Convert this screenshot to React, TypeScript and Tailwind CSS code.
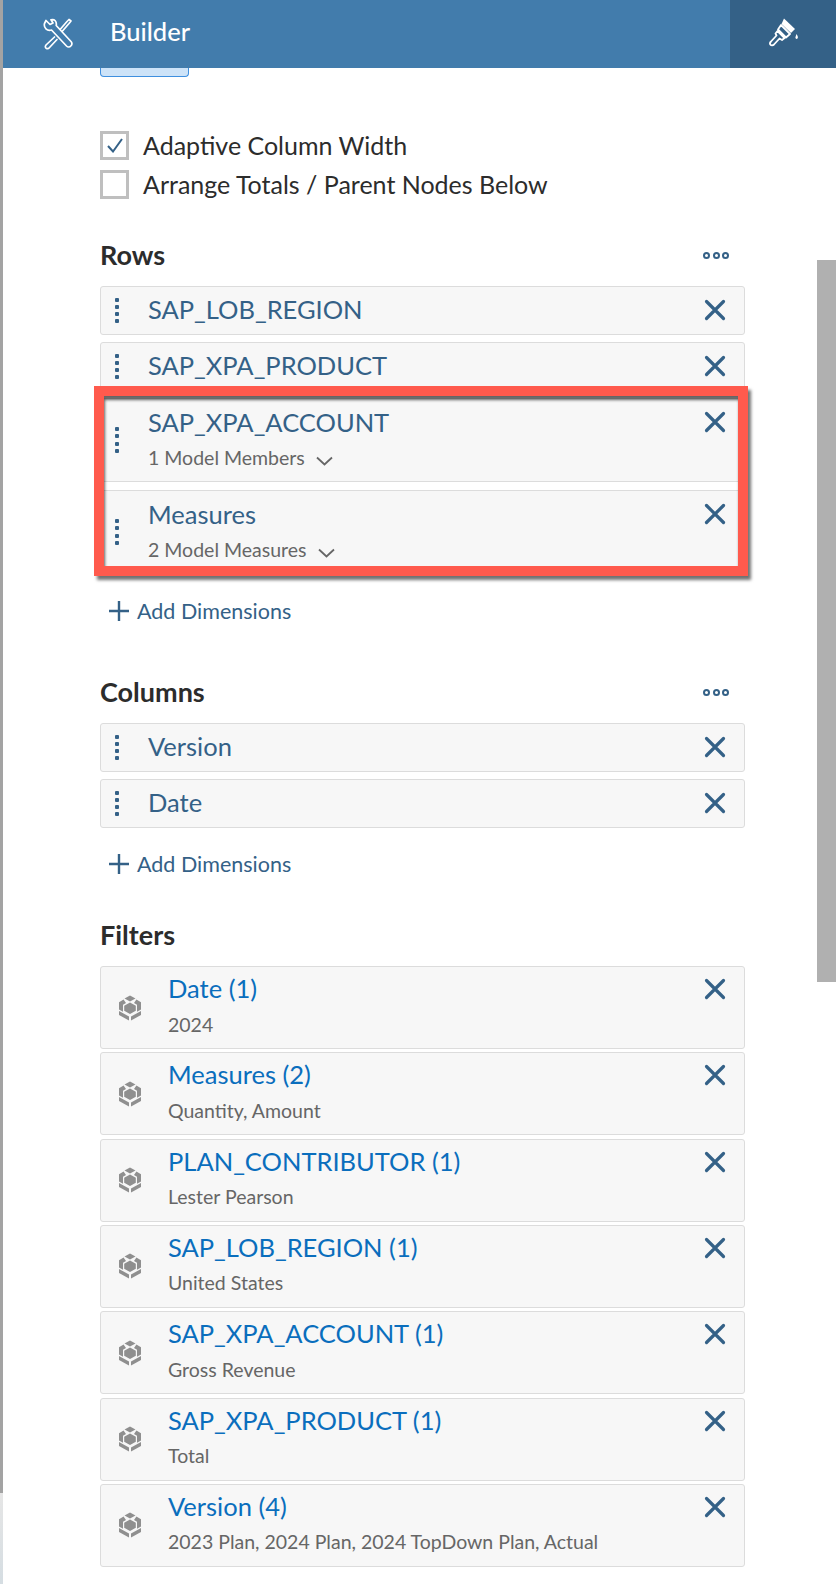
import React from "react";

const FONT = { fontFamily: 'Lato, "Noto Sans", sans-serif' };

const CloseIcon = () => (
  <svg width="22" height="22" viewBox="0 0 22 22" className="shrink-0">
    <path d="M2.5 2.5 L19.5 19.5 M19.5 2.5 L2.5 19.5" stroke="#346187" strokeWidth="3.2" strokeLinecap="round" fill="none" />
  </svg>
);

const GripIcon = () => (
  <div className="flex flex-col gap-[3.2px] w-[4px]">
    <div className="w-[4px] h-[4px] bg-[#346187] rounded-[1px]" />
    <div className="w-[4px] h-[4px] bg-[#346187] rounded-[1px]" />
    <div className="w-[4px] h-[4px] bg-[#346187] rounded-[1px]" />
    <div className="w-[4px] h-[4px] bg-[#346187] rounded-[1px]" />
  </div>
);

const Chevron = () => (
  <svg width="17" height="10" viewBox="0 0 17 10" className="ml-[11px] mt-[5px]">
    <path d="M1 1.5 L8.5 8.5 L16 1.5" stroke="#666" strokeWidth="1.8" fill="none" />
  </svg>
);

const CubeIcon = () => (
  <svg width="24" height="26" viewBox="0 0 24 26" className="shrink-0">
    <path d="M12 0.5 L17.5 3.6 L12 6.6 L6.5 3.6 Z" fill="#8f8f8f" />
    <path d="M5.6 4.6 L1 7.2 V14.5 L5 16.7 V9.8 L8 8 Z" fill="#8f8f8f" />
    <path d="M18.4 4.6 L23 7.2 V14.5 L19 16.7 V9.8 L16 8 Z" fill="#8f8f8f" />
    <path d="M12 7.6 L17.8 10.8 V15.8 L12 19 L6.2 15.8 V10.8 Z" fill="#8f8f8f" />
    <path d="M1 16 L11 21.6 V25.5 L1 20 Z" fill="#8f8f8f" />
    <path d="M23 16 L13 21.6 V25.5 L23 20 Z" fill="#8f8f8f" />
  </svg>
);

const ToolsIcon = () => (
  <svg width="32" height="32" viewBox="0 0 32 32" fill="none" stroke="#fff" strokeWidth="1.7" strokeLinejoin="round" strokeLinecap="round">
    <path d="M4 2.5 L8 6.5 L11 5 L9 1.8 C12.5 0.8 15 3.5 14.2 7.5 L29 23.5 C31.5 26.5 27.5 31 24.5 28 L9.5 12 C5 13.5 1.5 9.5 2.5 5.5 Z" />
    <path d="M18.5 11 L25 3.5 L27 1.5 L29 3 L27 5.5 L20.5 13" />
    <path d="M12.5 19 L4 27 C1.8 30 5.5 32 7.5 29.5 L15 21.5" />
  </svg>
);

const BrushIcon = () => (
  <svg width="32" height="32" viewBox="0 0 32 32" fill="none" className="mb-[2px]">
    <path d="M13 8 L22 17 L18 20.5 L10 12.5 Z M9.5 14 L16.5 21 L14 23 L11.5 21.5 L6 27.5 C3.5 30 0.5 27 3 24.5 L8.5 18.5 L7.5 16.5 Z" stroke="#fff" strokeWidth="1.8" strokeLinejoin="round" />
    <path d="M16 1.5 L27 12 L23 16 L13.5 7 Z" fill="#fff" />
    <path d="M28.5 17 C29.5 19 30.5 20 29.5 21.5 C28.5 22.5 27 21.5 27.5 20 Z" fill="#fff" />
  </svg>
);

type RowProps = { title: string; sub?: string };

const DimRow = ({ title, sub }: RowProps) => (
  <div className={`flex border border-[#dcdcdc] bg-[#f7f7f7] rounded-[3px] ${sub ? "h-[84px]" : "h-[49px]"}`}>
    <div className="w-[47px] flex justify-center items-center pr-[15px]">
      <GripIcon />
    </div>
    <div className={`flex-1 ${sub ? "pt-[5px]" : "pt-[4px]"}`}>
      <div className="text-[25.5px] leading-[36px] text-[#346187]">{title}</div>
      {sub && (
        <div className="flex items-center text-[19.5px] leading-[24px] text-[#666] mt-[6px]">
          {sub}
          <Chevron />
        </div>
      )}
    </div>
    <div className="pt-[12px] pr-[18px]">
      <CloseIcon />
    </div>
  </div>
);

const FilterRow = ({ title, sub }: { title: string; sub: string }) => (
  <div className="flex h-[83px] border border-[#dcdcdc] bg-[#f7f7f7] rounded-[3px]">
    <div className="w-[67px] flex justify-center items-center pr-[9px]">
      <CubeIcon />
    </div>
    <div className="flex-1 pt-[3px]">
      <div className="text-[25.5px] leading-[36px] text-[#0a6ebd]">{title}</div>
      <div className="text-[19.5px] leading-[24px] text-[#666] mt-[6.5px]">{sub}</div>
    </div>
    <div className="pt-[11px] pr-[18px]">
      <CloseIcon />
    </div>
  </div>
);

const Heading = ({ label, more }: { label: string; more?: boolean }) => (
  <div className="flex items-center justify-between h-[32px] w-[645px]">
    <span className="text-[27px] font-bold text-[#2c2c2c] leading-[32px]">{label}</span>
    {more && (
      <div className="flex gap-[2.5px] pr-[16px]">
        <div className="w-[7px] h-[7px] rounded-full border-2 border-[#346187]" />
        <div className="w-[7px] h-[7px] rounded-full border-2 border-[#346187]" />
        <div className="w-[7px] h-[7px] rounded-full border-2 border-[#346187]" />
      </div>
    )}
  </div>
);

const AddDimensions = () => (
  <div className="flex items-center h-[30px] pl-[9px] text-[21.5px] text-[#346187]">
    <svg width="20" height="20" viewBox="0 0 20 20" className="mr-[8px]">
      <path d="M10 0 V20 M0 10 H20" stroke="#346187" strokeWidth="2.4" />
    </svg>
    Add Dimensions
  </div>
);

export default function App() {
  return (
    <div className="relative flex w-[836px] h-[1584px] bg-white overflow-hidden" style={FONT}>
      <div className="w-[3px] h-full flex flex-col">
        <div className="h-[1493px] bg-[#a3a3a3]" />
        <div className="flex-1 bg-gradient-to-b from-[#e6e6e6] to-[#d5dde2]" />
      </div>

      <div className="flex-1 flex flex-col">
        <div className="flex h-[68px] bg-[#427cac] shrink-0">
          <div className="w-[107px] pl-[39px] flex items-center">
            <ToolsIcon />
          </div>
          <div className="flex-1 flex items-center text-[25.5px] font-medium text-white pb-[6px]">Builder</div>
          <div className="w-[106px] bg-[#346187] flex items-center justify-center pl-[2px]">
            <BrushIcon />
          </div>
        </div>

        <div className="pl-[97px] flex flex-col">
          <div className="w-[89px] h-[9px] bg-[#cde3f8] border border-t-0 border-[#3f8fdf] rounded-b-[4px]" />

          <div className="mt-[54px] flex flex-col gap-[10px]">
            <div className="flex items-center gap-[14px]">
              <div className="w-[29px] h-[29px] border-[3px] border-[#bfbfbf] flex items-center justify-center">
                <svg width="16" height="15" viewBox="0 0 16 15">
                  <path d="M1 8 L6 13.5 L15 1" stroke="#346187" strokeWidth="2" fill="none" />
                </svg>
              </div>
              <span className="text-[25px] leading-[29px] text-[#2c2c2c]">Adaptive Column Width</span>
            </div>
            <div className="flex items-center gap-[14px]">
              <div className="w-[29px] h-[29px] border-[3px] border-[#bfbfbf]" />
              <span className="text-[25px] leading-[29px] text-[#2c2c2c]">Arrange Totals / Parent Nodes Below</span>
            </div>
          </div>

          <div className="mt-[40px]">
            <Heading label="Rows" more />
          </div>

          <div className="relative mt-[15px] flex flex-col w-[645px] gap-[7px]">
            <DimRow title="SAP_LOB_REGION" />
            <DimRow title="SAP_XPA_PRODUCT" />
            <DimRow title="SAP_XPA_ACCOUNT" sub="1 Model Members" />
            <div className="mt-[1px]">
              <DimRow title="Measures" sub="2 Model Measures" />
            </div>
            <div className="absolute left-[-6px] top-[100px] w-[654px] h-[190px] border-[10px] border-[#ff5a4d] shadow-[3px_4px_3px_rgba(0,0,0,0.55),inset_1px_4px_3px_rgba(0,0,0,0.6)] pointer-events-none" />
          </div>

          <div className="mt-[22px]">
            <AddDimensions />
          </div>

          <div className="mt-[50px]">
            <Heading label="Columns" more />
          </div>
          <div className="mt-[15px] flex flex-col w-[645px] gap-[7px]">
            <DimRow title="Version" />
            <DimRow title="Date" />
          </div>
          <div className="mt-[21px]">
            <AddDimensions />
          </div>

          <div className="mt-[40px]">
            <Heading label="Filters" />
          </div>
          <div className="mt-[15px] flex flex-col w-[645px] gap-[3.33px]">
            <FilterRow title="Date (1)" sub="2024" />
            <FilterRow title="Measures (2)" sub="Quantity, Amount" />
            <FilterRow title="PLAN_CONTRIBUTOR (1)" sub="Lester Pearson" />
            <FilterRow title="SAP_LOB_REGION (1)" sub="United States" />
            <FilterRow title="SAP_XPA_ACCOUNT (1)" sub="Gross Revenue" />
            <FilterRow title="SAP_XPA_PRODUCT (1)" sub="Total" />
            <FilterRow title="Version (4)" sub="2023 Plan, 2024 Plan, 2024 TopDown Plan, Actual" />
          </div>
        </div>
      </div>

      <div className="absolute right-0 top-[260px] w-[19px] h-[722px] bg-[#b0b0b0]" />
    </div>
  );
}
